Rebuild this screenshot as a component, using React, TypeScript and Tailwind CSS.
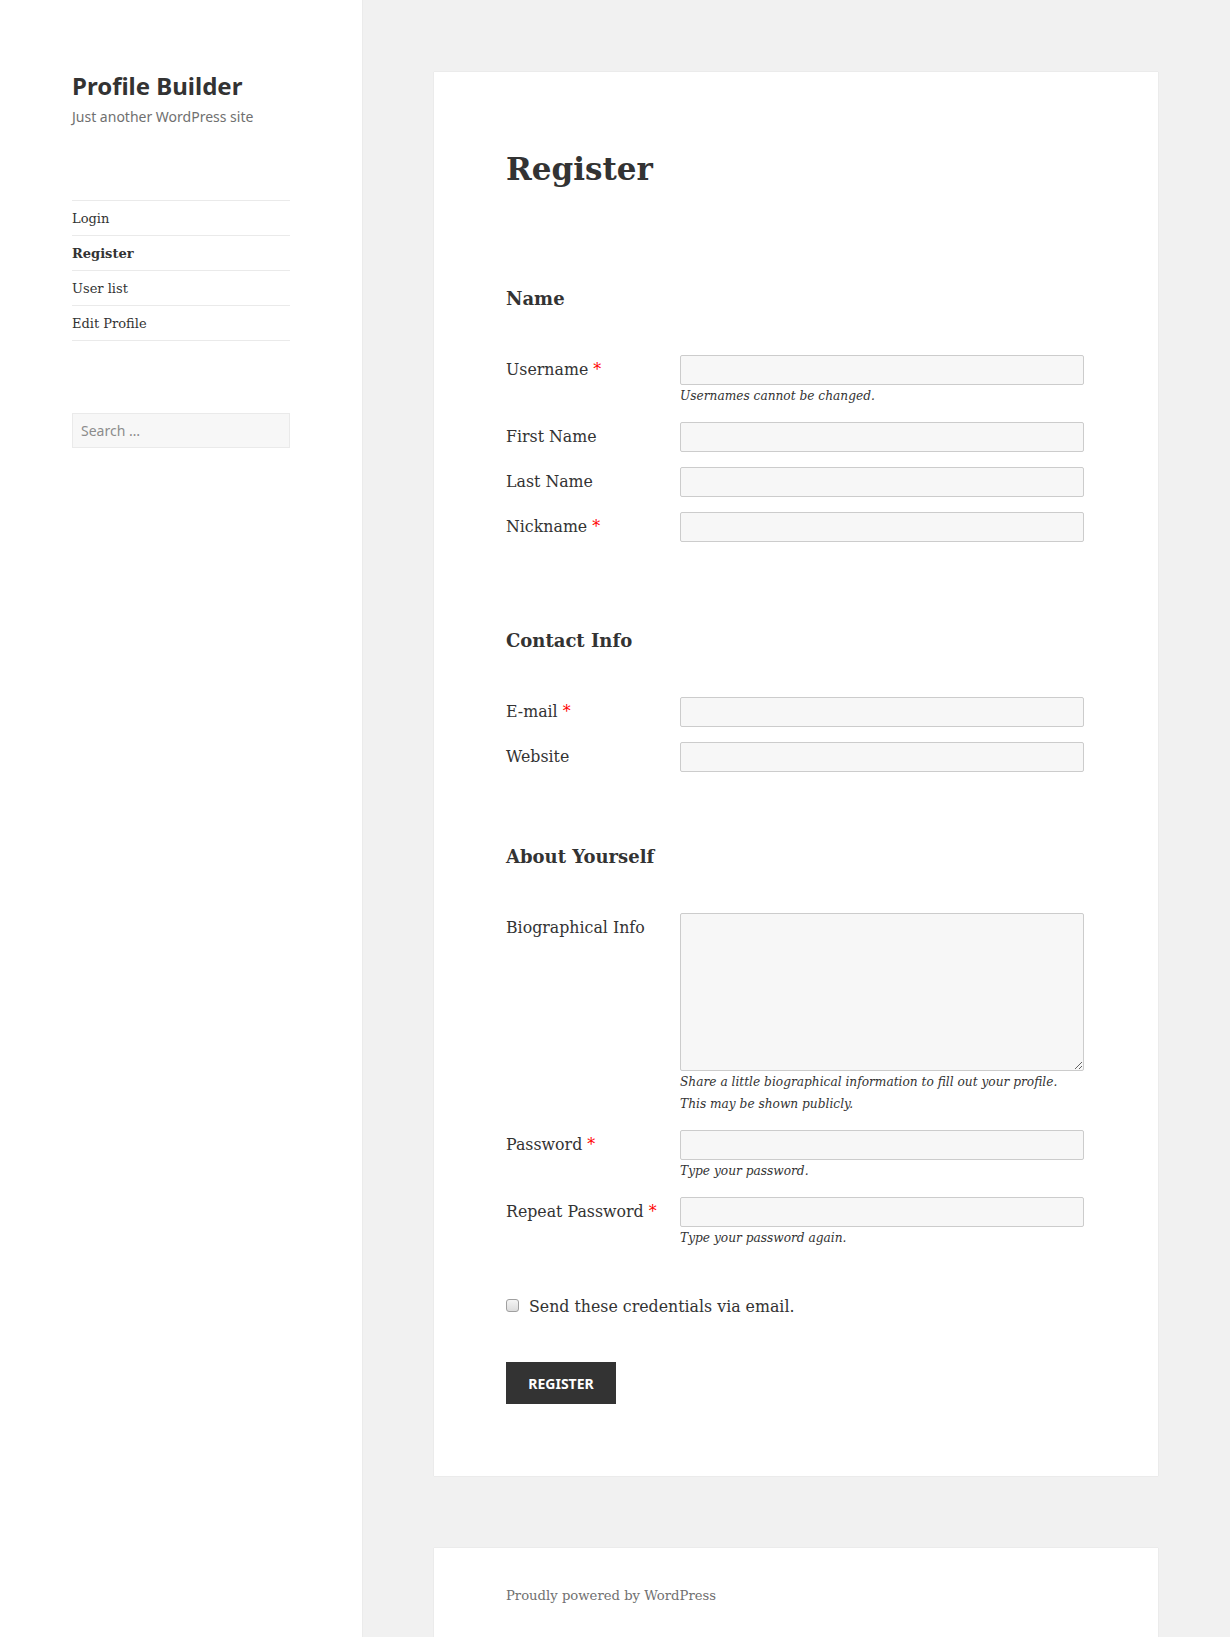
import React from "react";

type RowProps = {
  label: string;
  required?: boolean;
  hint?: React.ReactNode;
  children: React.ReactNode;
};

function Row({ label, required, hint, children }: RowProps) {
  return (
    <div className="flex">
      <div className="w-[174px] shrink-0 text-[15.8px] leading-[28px] pt-[1px]">
        <span>{label}</span>
        {required && <span className="text-[#ff0000]"> *</span>}
      </div>
      <div className="w-[404px]">
        {children}
        {hint && (
          <p className="italic text-[12.2px] leading-[21px] pt-[1px] whitespace-nowrap">{hint}</p>
        )}
      </div>
    </div>
  );
}

function TextInput({ type = "text" }: { type?: string }) {
  return (
    <input
      type={type}
      className="block w-full h-[30px] border border-[#cccccc] rounded-[2px] bg-[#f7f7f7] outline-none"
    />
  );
}

export default function App() {
  const nav = [
    { t: "Login", active: false },
    { t: "Register", active: true },
    { t: "User list", active: false },
    { t: "Edit Profile", active: false },
  ];
  return (
    <div className="min-h-screen bg-[#f1f1f1] flex text-[#333333] font-['DejaVu_Serif',serif]">
      <aside className="w-[362px] shrink-0 bg-white shadow-[0_0_1px_rgba(0,0,0,0.15)] px-[72px] pt-[72px] relative z-10">
        <div>
          <h1 className="font-['Noto_Sans',sans-serif] font-bold text-[24px] leading-[28px] text-[#333333]">
            Profile Builder
          </h1>
          <p className="mt-[6px] font-['Noto_Sans',sans-serif] text-[14px] leading-[21px] text-[#707070]">
            Just another WordPress site
          </p>
        </div>
        <nav className="mt-[73px]">
          <ul className="border-b border-[#eaeaea]">
            {nav.map((n) => (
              <li key={n.t} className="border-t border-[#eaeaea] text-[13px] leading-[24px] pt-[6px] pb-[4px]">
                <span className={n.active ? "font-bold" : ""}>{n.t}</span>
              </li>
            ))}
          </ul>
        </nav>
        <div className="mt-[72px]">
          <input
            type="search"
            placeholder="Search …"
            className="block w-full h-[35px] border border-[#eaeaea] bg-[#f7f7f7] px-[8px] text-[14px] font-['Noto_Sans',sans-serif] placeholder:text-[#8c8c8c] outline-none"
          />
        </div>
      </aside>

      <main className="flex-1 px-[72px] pt-[72px]">
        <article className="bg-white shadow-[0_0_1px_rgba(0,0,0,0.15)] px-[72px] pt-[72px] pb-[72px]">
          <h1 className="text-[31px] leading-[42px] font-bold pt-[4px]">Register</h1>

          <h4 className="mt-[95px] text-[18px] leading-[28px] font-bold">Name</h4>
          <div className="mt-[42px] flex flex-col gap-[15px]">
            <Row label="Username" required hint="Usernames cannot be changed.">
              <TextInput />
            </Row>
            <Row label="First Name">
              <TextInput />
            </Row>
            <Row label="Last Name">
              <TextInput />
            </Row>
            <Row label="Nickname" required>
              <TextInput />
            </Row>
          </div>

          <h4 className="mt-[85px] text-[18px] leading-[28px] font-bold">Contact Info</h4>
          <div className="mt-[42px] flex flex-col gap-[15px]">
            <Row label="E-mail" required>
              <TextInput />
            </Row>
            <Row label="Website">
              <TextInput />
            </Row>
          </div>

          <h4 className="mt-[71px] text-[18px] leading-[28px] font-bold">About Yourself</h4>
          <div className="mt-[42px] flex flex-col gap-[15px]">
            <Row
              label="Biographical Info"
              hint={
                <>
                  Share a little biographical information to fill out your profile.
                  <br />
                  <span className="inline-block pt-[1px]">This may be shown publicly.</span>
                </>
              }
            >
              <textarea className="block w-full h-[158px] border border-[#cccccc] rounded-[2px] bg-[#f7f7f7] outline-none resize-y" />
            </Row>
            <Row label="Password" required hint="Type your password.">
              <TextInput type="password" />
            </Row>
            <Row label="Repeat Password" required hint="Type your password again.">
              <TextInput type="password" />
            </Row>
          </div>

          <div className="mt-[43px] flex items-start text-[15.8px] leading-[28px]">
            <span className="mt-[7px] mr-[10px] w-[13px] h-[13px] shrink-0 rounded-[3px] border border-[#a0a0a0] bg-gradient-to-b from-[#f4f4f4] to-[#dcdcdc]" />
            <span className="pt-[1px] leading-[27px]">Send these credentials via email.</span>
          </div>

          <div className="mt-[42px]">
            <button
              type="button"
              className="w-[110px] h-[42px] bg-[#333333] text-white font-['Noto_Sans',sans-serif] font-bold text-[14px] uppercase"
            >
              Register
            </button>
          </div>
        </article>

        <footer className="mt-[72px] bg-white shadow-[0_0_1px_rgba(0,0,0,0.15)] px-[72px] pt-[36px] pb-[36px]">
          <p className="text-[13.2px] leading-[24px] text-[#707070]">Proudly powered by WordPress</p>
        </footer>
      </main>
    </div>
  );
}
